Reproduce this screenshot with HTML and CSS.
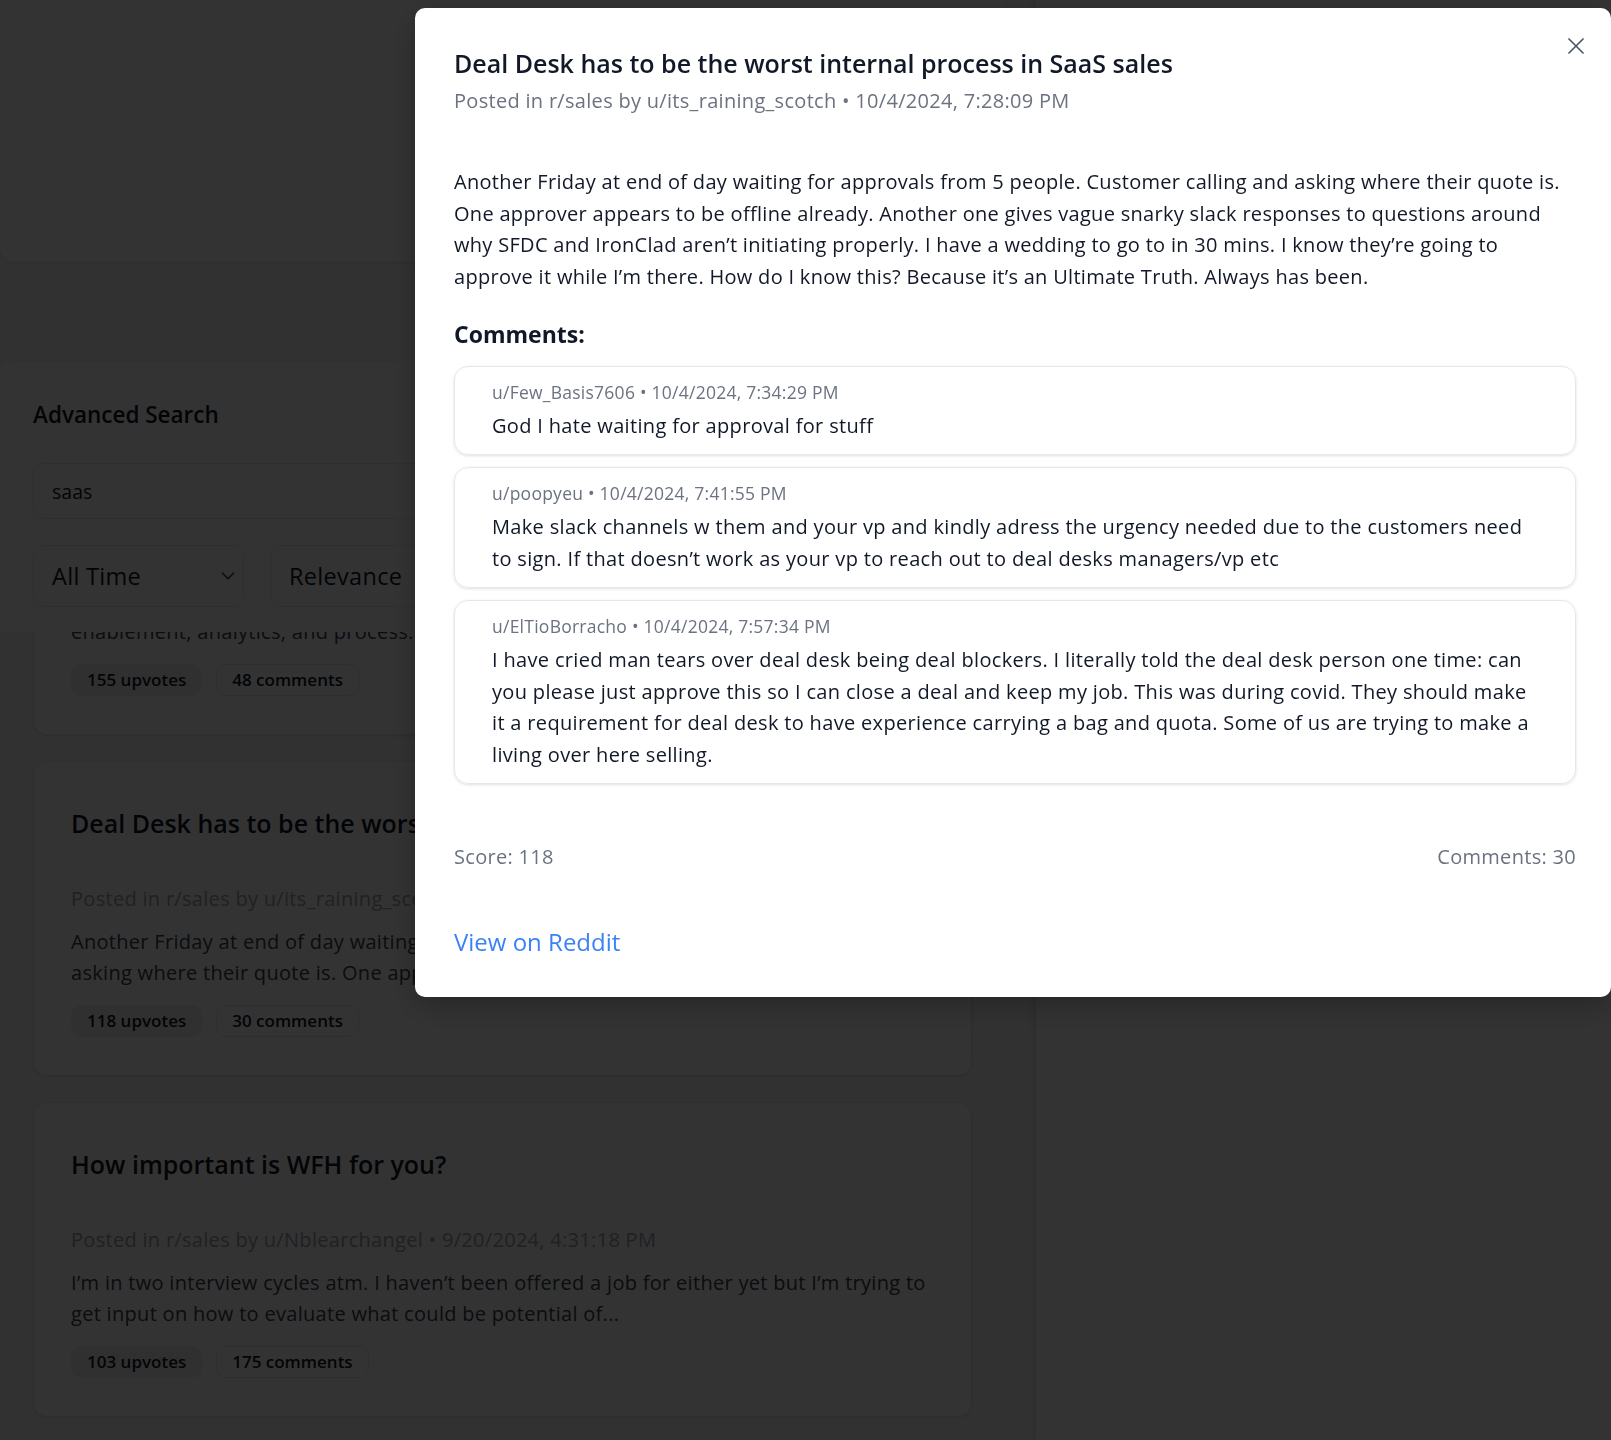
FILE: index.html
```html
<!DOCTYPE html>
<html lang="en">
<head>
<meta charset="utf-8">
<title>Reddit Search</title>
<link rel="stylesheet" href="styles.css">
</head>
<body>
<div class="page">
  <main class="left-col">
    <section class="top-card"></section>

    <section class="search-panel">
      <h2 class="search-title">Advanced Search</h2>
      <div class="search-input">saas</div>
      <div class="filters">
        <div class="select select-time">All Time
          <svg class="chev" viewBox="0 0 24 24" width="22" height="22"><path d="m6 9 6 6 6-6" fill="none" stroke="currentColor" stroke-width="1.8" stroke-linecap="round" stroke-linejoin="round"/></svg>
        </div>
        <div class="select select-sort">Relevance</div>
      </div>
    </section>

    <div class="results">
      <article class="post-card">
        <h3 class="post-title">Is RevOps the future of sales operations?</h3>
        <p class="post-meta">Posted in r/sales by u/ops_lead • 10/2/2024, 9:12:44 AM</p>
        <p class="post-body">Curious how others split sales ops, deal support,<br>enablement, analytics, and process.</p>
        <div class="pills"><span class="pill pill-solid">155 upvotes</span><span class="pill pill-outline">48 comments</span></div>
      </article>

      <article class="post-card">
        <h3 class="post-title">Deal Desk has to be the worst internal process in SaaS sales</h3>
        <p class="post-meta">Posted in r/sales by u/its_raining_scotch • 10/4/2024, 7:28:09 PM</p>
        <p class="post-body">Another Friday at end of day waiting for approvals from 5 people. Customer calling and asking where their quote is. One approver appears to be offline already...</p>
        <div class="pills"><span class="pill pill-solid">118 upvotes</span><span class="pill pill-outline">30 comments</span></div>
      </article>

      <article class="post-card">
        <h3 class="post-title">How important is WFH for you?</h3>
        <p class="post-meta">Posted in r/sales by u/Nblearchangel • 9/20/2024, 4:31:18 PM</p>
        <p class="post-body">I’m in two interview cycles atm. I haven’t been offered a job for either yet but I’m trying to get input on how to evaluate what could be potential of...</p>
        <div class="pills"><span class="pill pill-solid">103 upvotes</span><span class="pill pill-outline">175 comments</span></div>
      </article>
    </div>
  </main>
  <aside class="right-panel"></aside>
</div>

<div class="overlay"></div>

<div class="modal" role="dialog">
  <button class="close-btn" aria-label="Close">
    <svg viewBox="0 0 24 24" width="26" height="26"><path d="M18.5 5.5 5.5 18.5M5.5 5.5l13 13" fill="none" stroke="currentColor" stroke-width="1.5" stroke-linecap="round" stroke-linejoin="round"/></svg>
  </button>
  <h2 class="modal-title">Deal Desk has to be the worst internal process in SaaS sales</h2>
  <p class="modal-meta">Posted in r/sales by u/its_raining_scotch • 10/4/2024, 7:28:09 PM</p>
  <p class="modal-body">Another Friday at end of day waiting for approvals from 5 people. Customer calling and asking where their quote is. One approver appears to be offline already. Another one gives vague snarky slack responses to questions around why SFDC and IronClad aren’t initiating properly. I have a wedding to go to in 30 mins. I know they’re going to approve it while I’m there. How do I know this? Because it’s an Ultimate Truth. Always has been.</p>

  <h3 class="comments-title">Comments:</h3>
  <div class="comments">
    <div class="comment">
      <p class="comment-meta">u/Few_Basis7606 • 10/4/2024, 7:34:29 PM</p>
      <p class="comment-body">God I hate waiting for approval for stuff</p>
    </div>
    <div class="comment">
      <p class="comment-meta">u/poopyeu • 10/4/2024, 7:41:55 PM</p>
      <p class="comment-body">Make slack channels w them and your vp and kindly adress the urgency needed due to the customers need to sign. If that doesn’t work as your vp to reach out to deal desks managers/vp etc</p>
    </div>
    <div class="comment">
      <p class="comment-meta">u/ElTioBorracho • 10/4/2024, 7:57:34 PM</p>
      <p class="comment-body">I have cried man tears over deal desk being deal blockers. I literally told the deal desk person one time: can you please just approve this so I can close a deal and keep my job. This was during covid. They should make it a requirement for deal desk to have experience carrying a bag and quota. Some of us are trying to make a living over here selling.</p>
    </div>
  </div>

  <div class="modal-stats">
    <span>Score: 118</span>
    <span>Comments: 30</span>
  </div>
  <a class="reddit-link" href="#">View on Reddit</a>
</div>
</body>
</html>
```

FILE: styles.css
```css
* { box-sizing: border-box; }

html, body {
  margin: 0;
  padding: 0;
}

body {
  width: 1611px;
  height: 1440px;
  overflow: hidden;
  background: #f6f6f6;
  font-family: "Open Sans", "Noto Sans", sans-serif;
  color: #111827;
}

p, h2, h3 { margin: 0; }

.page {
  display: flex;
  height: 1440px;
}

.left-col {
  width: 1005px;
  display: flex;
  flex-direction: column;
}

.top-card {
  height: 262px;
  flex: none;
  background: #fff;
  border-radius: 0 0 14px 14px;
  box-shadow: 0 1px 3px rgba(0,0,0,0.12);
}

.search-panel {
  position: relative;
  z-index: 1;
  margin-top: 100px;
  background: #fff;
  border-radius: 14px 14px 0 0;
  padding: 35px 33px 25px;
}

.search-title {
  font-size: 22.5px;
  line-height: 36px;
  font-weight: 600;
  color: #111827;
}

.search-input {
  margin-top: 30px;
  height: 56px;
  border: 1px solid #e5e7eb;
  border-radius: 10px;
  padding: 0 18px;
  display: flex;
  align-items: center;
  font-size: 19.5px;
  color: #111827;
}

.filters {
  margin-top: 26px;
  display: flex;
  gap: 26px;
}

.select {
  height: 62px;
  border: 1px solid #e5e7eb;
  border-radius: 10px;
  padding: 0 18px;
  display: flex;
  align-items: center;
  justify-content: space-between;
  font-size: 23.5px;
  letter-spacing: 0.3px;
  color: #111827;
}

.select-time { width: 211px; padding-right: 4px; }
.select-sort { width: 260px; }

.chev { color: #374151; }

.results {
  margin-top: -212px;
  padding: 0 33px;
  display: flex;
  flex-direction: column;
  gap: 26px;
}

.post-card {
  width: 939px;
  height: 315px;
  flex: none;
  background: #fff;
  border: 1px solid #e5e7eb;
  border-radius: 14px;
  box-shadow: 0 1px 3px rgba(0,0,0,0.1);
  padding: 43px 30px 0 37px;
}

.post-title {
  font-size: 25px;
  line-height: 36px;
  font-weight: 600;
  color: #111827;
  white-space: nowrap;
}

.post-meta {
  margin-top: 42px;
  font-size: 20px;
  letter-spacing: 0.3px;
  line-height: 31.5px;
  color: #9ca3af;
  white-space: nowrap;
}

.post-body {
  margin-top: 11px;
  font-size: 20px;
  letter-spacing: 0.3px;
  line-height: 31.5px;
  color: #374151;
  display: -webkit-box;
  -webkit-line-clamp: 2;
  -webkit-box-orient: vertical;
  overflow: hidden;
}

.pills {
  margin-top: 16px;
  display: flex;
  gap: 14px;
}

.pill {
  height: 32px;
  display: inline-flex;
  align-items: center;
  padding: 0 15px;
  border-radius: 10px;
  font-size: 17px;
  font-weight: 600;
  color: #111827;
}

.pill-solid { background: #eef1f5; border: 1px solid transparent; }
.pill-outline { border: 1px solid #e5e7eb; }

.right-panel {
  margin-left: 31px;
  flex: 1;
  background: #fff;
  box-shadow: -2px 0 6px rgba(0,0,0,0.1);
}

.overlay {
  position: fixed;
  inset: 0;
  z-index: 10;
  background: rgba(0,0,0,0.8);
}

.modal {
  position: fixed;
  z-index: 11;
  top: 8px;
  left: 415px;
  right: 0;
  background: #fff;
  border-radius: 10px;
  box-shadow: 0 10px 30px rgba(0,0,0,0.25);
  padding: 37px 35px 40px 39px;
}

.close-btn {
  position: absolute;
  top: 25px;
  right: 22px;
  width: 26px;
  height: 26px;
  padding: 0;
  border: 0;
  background: none;
  color: #4b5563;
  display: flex;
}

.modal-title {
  font-size: 25px;
  line-height: 36px;
  font-weight: 600;
  color: #111827;
}

.modal-meta {
  margin-top: 4px;
  font-size: 20px;
  letter-spacing: 0.3px;
  line-height: 31.5px;
  color: #6b7280;
}

.modal-body {
  margin-top: 49.5px;
  font-size: 20px;
  letter-spacing: 0.3px;
  line-height: 31.5px;
  color: #111827;
}

.comments-title {
  margin-top: 27px;
  font-size: 23px;
  line-height: 31.5px;
  font-weight: 700;
  color: #111827;
}

.comments {
  margin-top: 15px;
  display: flex;
  flex-direction: column;
  gap: 12px;
}

.comment {
  border: 1px solid #e5e7eb;
  border-radius: 14px;
  box-shadow: 0 1px 3px rgba(0,0,0,0.12);
  padding: 13px 36px 13px 37px;
}

.comment-meta {
  font-size: 17.5px;
  letter-spacing: 0.25px;
  line-height: 24px;
  color: #6b7280;
}

.comment-body {
  margin-top: 6px;
  font-size: 20px;
  letter-spacing: 0.33px;
  line-height: 31.5px;
  color: #111827;
}

.modal-stats {
  margin-top: 56.5px;
  display: flex;
  justify-content: space-between;
  font-size: 20px;
  letter-spacing: 0.3px;
  line-height: 31.5px;
  color: #6b7280;
}

.reddit-link {
  display: inline-block;
  margin-top: 53.5px;
  font-size: 24px;
  line-height: 31.5px;
  color: #3b82f6;
  text-decoration: none;
}
```
